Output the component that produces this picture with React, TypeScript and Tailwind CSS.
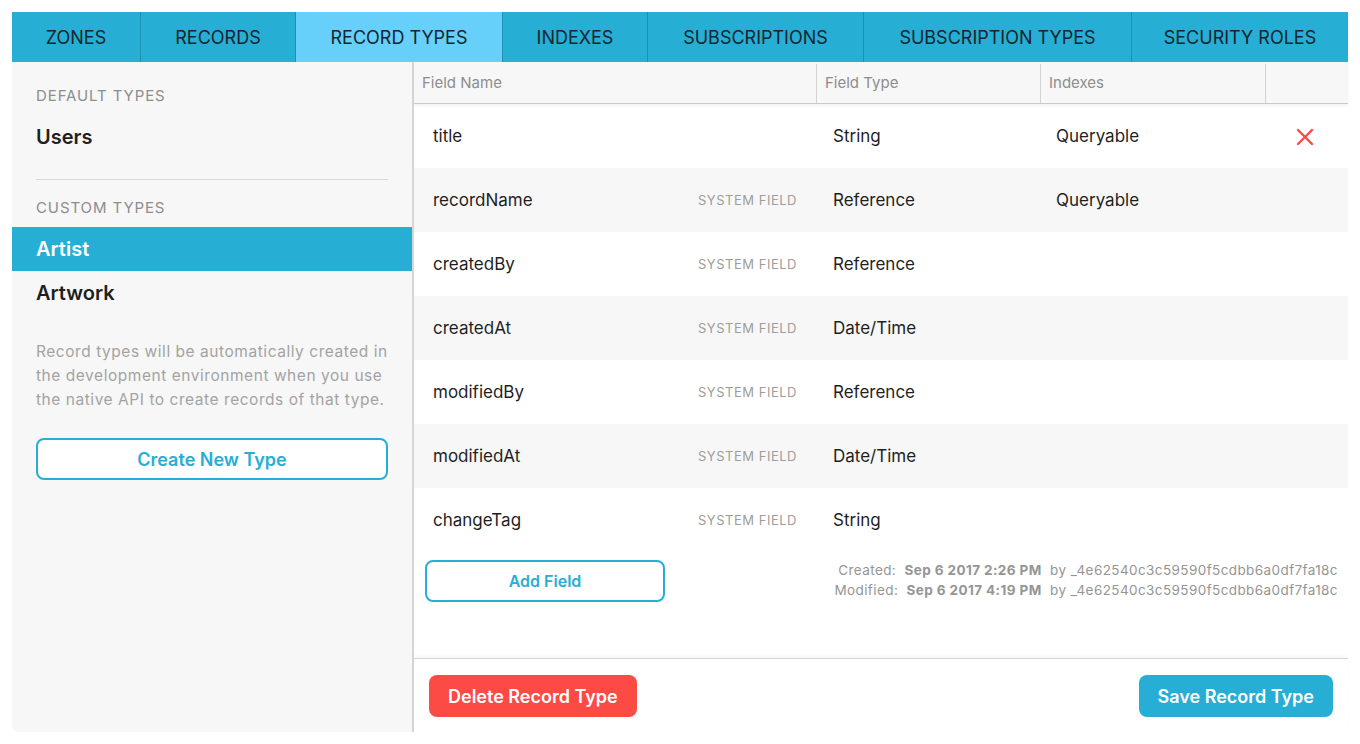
const tabs = [
  { label: "ZONES", w: "w-[129px]" },
  { label: "RECORDS", w: "w-[155px]" },
  { label: "RECORD TYPES", w: "w-[207px]", active: true },
  { label: "INDEXES", w: "w-[145px]" },
  { label: "SUBSCRIPTIONS", w: "w-[216px]" },
  { label: "SUBSCRIPTION TYPES", w: "w-[268px]" },
  { label: "SECURITY ROLES", w: "flex-1", last: true },
];

const fields = [
  { name: "title", type: "String", index: "Queryable", system: false },
  { name: "recordName", type: "Reference", index: "Queryable", system: true },
  { name: "createdBy", type: "Reference", index: "", system: true },
  { name: "createdAt", type: "Date/Time", index: "", system: true },
  { name: "modifiedBy", type: "Reference", index: "", system: true },
  { name: "modifiedAt", type: "Date/Time", index: "", system: true },
  { name: "changeTag", type: "String", index: "", system: true },
];

function CloseIcon() {
  return (
    <svg width="18" height="18" viewBox="0 0 18 18" fill="none">
      <path d="M2 2 L16 16 M16 2 L2 16" stroke="#fc4a44" strokeWidth="2.4" strokeLinecap="round" />
    </svg>
  );
}

function Sidebar() {
  return (
    <aside className="w-[402px] shrink-0 bg-[#f7f7f7] border-r-2 border-[#d6d6d6] rounded-bl-[6px] pt-[24px]">
      <div className="px-[24px] h-[20px] leading-[20px] text-[15px] tracking-[0.06em] text-[#8d8d8d]">DEFAULT TYPES</div>
      <div className="mt-[9px] h-[44px] flex items-center px-[24px] text-[20px] font-semibold text-[#1f1f1f]">Users</div>
      <div className="mx-[24px] mt-[20px] border-t border-[#d9d9d9]" />
      <div className="mt-[18px] px-[24px] h-[20px] leading-[20px] text-[15px] tracking-[0.06em] text-[#8d8d8d]">CUSTOM TYPES</div>
      <div className="mt-[9px] h-[44px] flex items-center px-[24px] text-[20px] font-semibold text-white bg-[#27aed5]">Artist</div>
      <div className="h-[44px] flex items-center px-[24px] text-[20px] font-semibold text-[#1f1f1f]">Artwork</div>
      <p className="mt-[25px] pl-[24px] pr-[20px] text-[15.5px] tracking-[0.035em] leading-[24px] text-[#a3a3a3]">
        Record types will be automatically created in the development environment when you use the native API to create records of that type.
      </p>
      <div className="px-[24px] mt-[26px]">
        <button className="w-full h-[42px] rounded-[8px] border-2 border-[#27aed5] bg-white text-[18px] font-semibold text-[#27aed5]">
          Create New Type
        </button>
      </div>
    </aside>
  );
}

function FieldTable() {
  return (
    <div className="flex-1 flex flex-col">
      <div className="flex h-[42px] pt-[2px] bg-[#f7f7f7] border-b border-[#c9c9c9] text-[15px] text-[#8d8d8d] shadow-[0_2px_3px_rgba(0,0,0,0.05)] relative">
        <div className="w-[403px] pl-[8px] flex items-center border-r border-[#d2d2d2]">Field Name</div>
        <div className="w-[224px] pl-[8px] flex items-center border-r border-[#d2d2d2]">Field Type</div>
        <div className="w-[225px] pl-[8px] flex items-center border-r border-[#d2d2d2]">Indexes</div>
        <div className="flex-1" />
      </div>
      {fields.map((f, i) => (
        <div key={f.name} className={`flex h-[64px] pt-[2px] items-center text-[17px] text-[#1f1f1f] ${i % 2 === 1 ? "bg-[#f7f7f7]" : "bg-white"}`}>
          <div className="w-[403px] pl-[19px] pr-[20px] flex items-center justify-between">
            <span>{f.name}</span>
            {f.system && <span className="text-[13px] tracking-[0.04em] text-[#9d9d9d]">SYSTEM FIELD</span>}
          </div>
          <div className="w-[224px] pl-[16px]">{f.type}</div>
          <div className="w-[225px] pl-[15px]">{f.index}</div>
          <div className="flex-1 flex justify-center pr-[4px]">{i === 0 && <CloseIcon />}</div>
        </div>
      ))}
      <div className="flex justify-between items-start pt-[8px] pl-[11px] pr-[10px]">
        <button className="w-[240px] h-[42px] rounded-[8px] border-2 border-[#27aed5] bg-white text-[16px] font-semibold text-[#27aed5]">
          Add Field
        </button>
        <div className="text-[13.5px] tracking-[0.03em] leading-[20px] text-[#959595] text-right">
          <div>
            Created:&nbsp; <span className="font-bold">Sep 6 2017 2:26 PM</span>&nbsp; by _4e62540c3c59590f5cdbb6a0df7fa18c
          </div>
          <div>
            Modified:&nbsp; <span className="font-bold">Sep 6 2017 4:19 PM</span>&nbsp; by _4e62540c3c59590f5cdbb6a0df7fa18c
          </div>
        </div>
      </div>
      <div className="flex-1" />
      <div className="h-[74px] border-t border-[#d6d6d6] shadow-[0_-3px_4px_rgba(0,0,0,0.03)] flex items-start justify-between pt-[16px] px-[15px]">
        <button className="h-[42px] px-[19px] rounded-[8px] bg-[#fc4a44] text-white text-[18px] font-semibold">Delete Record Type</button>
        <button className="h-[42px] px-[19px] rounded-[8px] bg-[#27aed5] text-white text-[18px] font-semibold">Save Record Type</button>
      </div>
    </div>
  );
}

export default function App() {
  return (
    <div className="min-h-screen bg-white pt-[12px] px-[12px] font-['Inter','Liberation_Sans',sans-serif]">
      <nav className="flex h-[50px] bg-[#27aed5]">
        {tabs.map((t) => (
          <div
            key={t.label}
            className={`${t.w} flex items-center justify-center text-[18px] text-[#15262e] ${t.last ? "" : "border-r border-[#1e92b4]"} ${t.active ? "bg-[#66d0fb]" : ""}`}
          >
            {t.label}
          </div>
        ))}
      </nav>
      <div className="flex h-[670px]">
        <Sidebar />
        <FieldTable />
      </div>
    </div>
  );
}
